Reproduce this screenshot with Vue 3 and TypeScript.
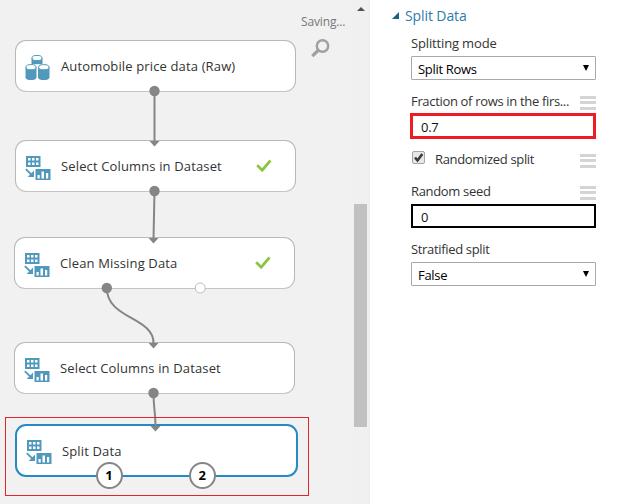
<script setup lang="ts">
interface FlowNode {
  id: number
  label: string
  icon: 'data' | 'transform'
  x: number
  y: number
  done?: boolean
  selected?: boolean
}

interface Edge {
  path: string
  tipX: number
  tipY: number
}

const nodes: FlowNode[] = [
  { id: 1, label: 'Automobile price data (Raw)', icon: 'data', x: 15, y: 40 },
  { id: 2, label: 'Select Columns in Dataset', icon: 'transform', x: 15, y: 140, done: true },
  { id: 3, label: 'Clean Missing Data', icon: 'transform', x: 14, y: 237, done: true },
  { id: 4, label: 'Select Columns in Dataset', icon: 'transform', x: 14, y: 342 },
  { id: 5, label: 'Split Data', icon: 'transform', x: 15, y: 424, selected: true },
]

const edges: Edge[] = [
  { path: 'M154.5 91V142', tipX: 154.5, tipY: 146.5 },
  { path: 'M154.5 191L153.5 239', tipX: 153.5, tipY: 243.5 },
  { path: 'M106.8 288C106.8 319 153.5 317 153.5 343', tipX: 153.5, tipY: 348.5 },
  { path: 'M153.5 393C153.5 409 155.5 411 155.5 427', tipX: 155.5, tipY: 431.5 },
]

const ports = [
  { x: 154.5, y: 91 },
  { x: 154.5, y: 191 },
  { x: 106.8, y: 288 },
  { x: 153.5, y: 393 },
]

const badges = [
  { label: '1', x: 95.5 },
  { label: '2', x: 188.8 },
]
</script>

<template>
  <div class="app">
    <section class="canvas">
      <div
        v-for="n in nodes"
        :key="n.id"
        class="node"
        :class="{ selected: n.selected }"
        :style="{ left: n.x + 'px', top: n.y + 'px' }"
      >
        <svg v-if="n.icon === 'data'" class="icon data" width="26" height="27" viewBox="0 0 26 27">
          <g fill="#5099bd">
            <path d="M6.5 4h11v6.200h-11z" />
            <path d="M.5 13v10.5c0 3.400 11 3.400 11 0V13zM13 13v10.500c0 3.400 11.500 3.400 11.500 0V13z" />
          </g>
          <g fill="#fff" stroke="#5099bd">
            <ellipse cx="12" cy="4" rx="5" ry="2.600" />
            <ellipse cx="6" cy="13.200" rx="5" ry="2.600" />
            <ellipse cx="18.800" cy="13.200" rx="5.200" ry="2.600" />
          </g>
        </svg>
        <svg v-else class="icon" width="26" height="24" viewBox="0 0 26 24">
          <path fill="#5099bd" d="M1 0h14.500v11H1zM10.500 13H25.500v11H10.500z" />
          <path
            fill="#fff"
            d="M3 2h2.500v2.500H3zM7 2h2.500v2.500H7zM11 2h2.500v2.500H11zM3 6.500h2.500V9H3zM7 6.500h2.500V9H7zM11 6.500h2.500V9H11zM12.500 19h2.200v3.500h-2.200zM16.500 15.500h2.500v7h-2.500zM21 17h2.200v5.500H21z"
          />
          <path fill="none" stroke="#5099bd" stroke-width="1.800" d="M.8 13.200l6 5.800" />
          <path fill="#5099bd" d="M9 14.500V21H2.700z" />
        </svg>
        <span class="name">{{ n.label }}</span>
        <svg v-if="n.done" class="check" width="16" height="14" viewBox="0 0 16 14">
          <path d="M1.200 6.200l5 5L14.500 1.500" fill="none" stroke="#8cc63f" stroke-width="2.700" />
        </svg>
      </div>

      <svg class="wires" width="370" height="504" viewBox="0 0 370 504">
        <g v-for="(e, i) in edges" :key="i">
          <path :d="e.path" fill="none" stroke="#858585" stroke-width="2" />
          <path :d="`M${e.tipX - 5} ${e.tipY - 5.5}h10l-5 5.5z`" fill="#858585" />
        </g>
        <circle v-for="(p, i) in ports" :key="'p' + i" :cx="p.x" :cy="p.y" r="5.200" fill="#858585" />
        <circle cx="200.200" cy="288" r="5" fill="#fff" stroke="#bcbcbc" />
      </svg>

      <div class="highlight"></div>
      <span v-for="b in badges" :key="b.label" class="badge" :style="{ left: b.x + 'px' }">{{ b.label }}</span>

      <div class="tools">
        <span class="saving">Saving...</span>
        <svg class="search" width="19" height="19" viewBox="0 0 19 19" fill="none" stroke="#a0a0a0">
          <circle cx="11.500" cy="7" r="5.700" stroke-width="2.400" />
          <path d="M7.500 11L1.300 17.200" stroke-width="3.200" />
        </svg>
      </div>

      <div class="scrollbar">
        <i class="up"></i>
        <i class="thumb"></i>
      </div>
    </section>

    <aside class="panel">
      <h1><i></i><span>Split Data</span></h1>
      <div class="row mode"><label>Splitting mode</label></div>
      <div class="select"><span>Split Rows</span><i></i></div>
      <div class="row fraction"><label class="long">Fraction of rows in the firs...</label><b class="menu"></b></div>
      <div class="input red">0.7</div>
      <div class="row random">
        <svg class="tick" width="13" height="13" viewBox="0 0 13 13">
          <rect x=".5" y=".5" width="12" height="12" rx="1.500" fill="#e8e8e8" stroke="#a5a5a5" />
          <path d="M3 6.500l2.500 3L10.300 3" fill="none" stroke="#3c3c3c" stroke-width="2.600" />
        </svg>
        <label class="rs">Randomized split</label><b class="menu"></b>
      </div>
      <div class="row seed"><label>Random seed</label><b class="menu"></b></div>
      <div class="input">0</div>
      <div class="row strat"><label>Stratified split</label></div>
      <div class="select"><span>False</span><i></i></div>
    </aside>
  </div>
</template>

<style>
body {
  background: #fff;
  overflow: hidden;
}
</style>

<style scoped>
.app {
  display: flex;
  width: 620px;
  height: 504px;
  overflow: hidden;
  background: #fff;
  font-family: 'Open Sans', 'Noto Sans', sans-serif;
  font-size: 13px;
  color: #333;
}
.canvas {
  position: relative;
  box-sizing: border-box;
  width: 370px;
  height: 504px;
  background: #f1f1f1;
  display: flex;
  justify-content: flex-end;
}
.node {
  position: absolute;
  box-sizing: border-box;
  display: flex;
  align-items: center;
  width: 281px;
  height: 52px;
  padding-left: 9px;
  background: #fff;
  border: 1px solid #b8b8b8;
  border-bottom-color: #c4c4c4;
  border-radius: 11px;
}
.node.selected {
  width: 283px;
  height: 53px;
  border: 2px solid #268bc3;
}
.icon {
  flex: none;
  width: 26px;
  margin-top: 3px;
}
.icon.data {
  margin-top: 2px;
}
.name {
  margin-left: 10px;
  white-space: nowrap;
  line-height: 18px;
  letter-spacing: 0.14px;
}
.check {
  position: absolute;
  left: 240px;
  top: 18px;
}
.wires {
  position: absolute;
  left: 0;
  top: 0;
}
.highlight {
  position: absolute;
  box-sizing: border-box;
  left: 5px;
  top: 417px;
  width: 304px;
  height: 79px;
  border: 1px solid #e4242c;
}
.badge {
  position: absolute;
  top: 462px;
  box-sizing: border-box;
  width: 27px;
  height: 27px;
  border: 2px solid #858585;
  border-radius: 50%;
  background: #fff;
  color: #000;
  font-weight: 700;
  text-align: center;
  line-height: 23px;
}
.tools {
  width: 46px;
  padding: 13px 7px 0 0;
  display: flex;
  flex-direction: column;
}
.saving {
  margin-left: 1px;
  font-size: 12px;
  line-height: 17px;
  letter-spacing: -0.15px;
  color: #777;
}
.search {
  margin: 9px 0 0 11px;
}
.scrollbar {
  width: 16px;
  height: 504px;
  background: #f0f0f0;
  border-right: 1px solid #ebebeb;
  display: flex;
  flex-direction: column;
}
.up {
  margin: 7px 0 0 4px;
  width: 0;
  border: 4px solid transparent;
  border-top: 0;
  border-bottom-color: #505050;
}
.thumb {
  width: 13px;
  height: 223px;
  margin: 193px 0 0 1px;
  background: #c1c1c1;
}
.panel {
  width: 185px;
  padding-left: 41px;
  display: flex;
  flex-direction: column;
}
h1 {
  display: flex;
  margin: 6px 0 0 -20px;
  height: 20px;
  font-size: 14px;
  line-height: 19px;
  font-weight: 400;
  letter-spacing: -0.1px;
  color: #2f7ba8;
}
h1 i {
  width: 7px;
  height: 7px;
  margin: 6px 6px 0 1px;
  background: #1b6287;
  clip-path: polygon(100% 0, 100% 100%, 0 100%);
}
.row {
  display: flex;
  align-items: center;
  justify-content: space-between;
  height: 18px;
  line-height: 18px;
  white-space: nowrap;
  letter-spacing: -0.33px;
}
.mode {
  margin-top: 8px;
  letter-spacing: -0.15px;
}
.select {
  box-sizing: border-box;
  height: 24px;
  margin-top: 4px;
  padding: 1px 6px 0;
  border: 1px solid #a9a9a9;
  border-radius: 1px;
  display: flex;
  justify-content: space-between;
  color: #000;
  line-height: 23px;
  letter-spacing: -0.3px;
}
.select i {
  width: 0;
  height: 0;
  margin-top: 7px;
  border: 3px solid transparent;
  border-top: 6px solid #000;
  border-bottom: 0;
}
.fraction {
  margin-top: 12px;
}
.input {
  box-sizing: border-box;
  height: 24px;
  margin-top: 4px;
  padding: 1px 8px;
  border: 2px solid #000;
  color: #111;
  line-height: 20px;
}
.input.red {
  height: 26px;
  margin: 3px 0 0 -1px;
  padding-left: 8px;
  border: 3px solid #ed1c24;
  letter-spacing: -0.3px;
}
.random {
  margin-top: 11px;
}
.tick {
  margin: 0 10px 3px 1px;
}
.rs {
  flex: 1;
}
.menu {
  width: 16px;
  height: 14px;
  margin-top: 3px;
  background: linear-gradient(#d4d4d4 3px, transparent 3px 5px, #d4d4d4 5px 8px, transparent 8px 11px, #d4d4d4 11px);
}
.seed {
  margin-top: 14px;
}
.strat {
  margin-top: 12px;
}
</style>
